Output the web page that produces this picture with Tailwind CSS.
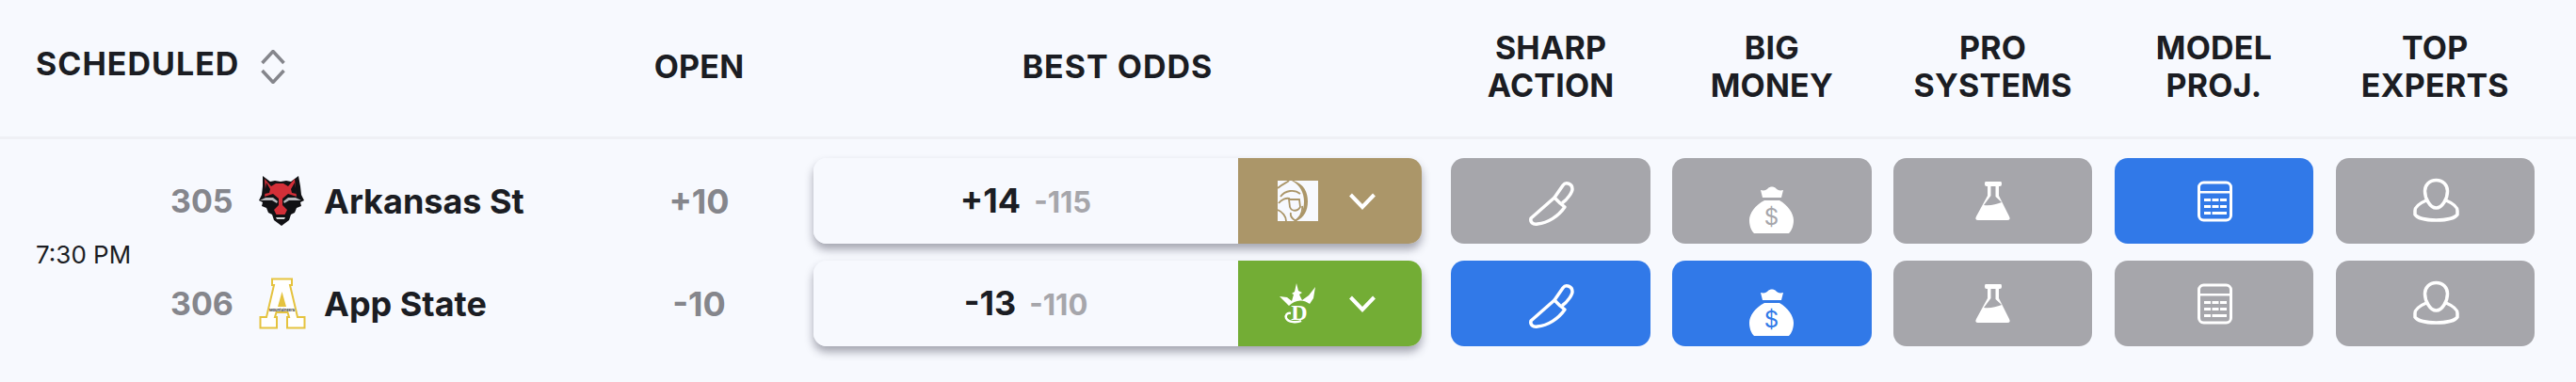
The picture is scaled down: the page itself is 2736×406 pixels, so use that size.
<!DOCTYPE html>
<html lang="en">
<head>
    <meta charset="UTF-8">
    <title>Odds Table</title>
    <script src="https://cdn.jsdelivr.net/npm/@tailwindcss/browser@4"></script>
</head>
<body class="h-[406px] w-[2736px] overflow-hidden bg-[#f7f9fe] text-[#1b1d23] font-['Inter',sans-serif]">
    <!-- header -->
    <div class="flex h-[148px] items-center border-b-[3px] border-[#eff0f5] pb-[4px] pl-[38px] text-[34px] leading-[40px] font-bold tracking-[0.2px] text-center">
        <div class="flex w-[623px] items-center">
            <span class="w-[239px] -mt-[5px] text-left tracking-[1px] whitespace-nowrap">SCHEDULED</span>
            <svg width="26" height="36" viewBox="0 0 26 36" fill="none" stroke="#85868c" stroke-width="3.5"><path d="M1.500 14 13 1.500 24.500 14M1.500 22 13 34.500 24.500 22"/></svg>
        </div>
        <div class="w-[163px]">OPEN</div>
        <div class="ml-[40px] w-[646px] tracking-[1px]">BEST ODDS</div>
        <div class="ml-[31.4px] w-[211.4px]">SHARP<br>ACTION</div>
        <div class="ml-[23.4px] w-[211.4px]">BIG<br>MONEY</div>
        <div class="ml-[23.4px] w-[211.4px]">PRO<br>SYSTEMS</div>
        <div class="ml-[23.4px] w-[211.4px]">MODEL<br>PROJ.</div>
        <div class="ml-[23.4px] w-[211.4px]">TOP<br>EXPERTS</div>
    </div>

    <!-- game -->
    <div class="flex pl-[38px] pt-[20px]">
        <div class="flex w-[143px] items-center pt-[4px] text-[26px] whitespace-nowrap">7:30 PM</div>
        <div class="flex flex-col gap-[18px]">

            <div class="flex h-[91px] items-center">
                <div class="w-[92px] text-[34px] font-bold text-[#85868c]">305</div>
                <div class="w-[71px]">
                    <svg class="-ml-[5px] -mt-[3px]" width="60" height="60" viewBox="0 0 60 60">
                        <path d="M11 5l8 6 5-1 6 1 6-1 5 1 8-6 2 11 1 9 3 6-4 2 1 4-5 2-2 5-4 2-2 6-4 3-4 3-4-3-4-3-2-6-4-2-2-5-5-2 1-4-4-2 3-6 1-9z" fill="#111114"/>
                        <path d="M13 8l7 8 5-3h8l5 3 7-8 1 12 1 7-9-3-6 5v7l5 5-3 6h-8l-3-6 5-5v-7l-6-5-9 3 1-7z" fill="#d32f38"/>
                        <path d="M15 12l4 7-1 4-5 1zM45 12l-4 7 1 4 5 1z" fill="#111114"/>
                        <path d="M8 31l6-3 8 0 5 4-1 2-5-3-7 0zM52 31l-6-3-8 0-5 4 1 2 5-3 7 0z" fill="#b8b8bc"/>
                        <path d="M24 46h12l-3 7h-6z" fill="#111114"/>
                        <path d="M25 49h10l-1 2h-8z" fill="#d8d8da"/>
                    </svg>
                </div>
                <div class="w-[317px] text-[36px] font-bold">Arkansas St</div>
                <div class="w-[163px] text-center text-[36px] font-bold text-[#85868c]">+10</div>
                <div class="ml-[40px] flex h-full w-[646px] overflow-hidden rounded-[14px] shadow-[0_6px_10px_rgba(40,40,60,0.4)]">
                    <div class="flex flex-1 items-baseline justify-center gap-[14px] bg-[#f7f9fe] font-bold">
                        <span class="text-[36px] leading-[91px]">+14</span>
                        <span class="text-[31px] text-[#a6a6ab]">-115</span>
                    </div>
                    <div class="flex w-[195px] items-center bg-[#ab9669] pl-[42px]">
                        <svg width="43" height="43" viewBox="0 0 43 43" fill="none" stroke="#ab9669" stroke-width="1.800">
                            <path d="M0 0h43v43H0z" fill="#f7f9fe" stroke="none"/>
                            <path d="M17 0c11 4 15 12 15 22s-4 17-12 21h-3c8-4 11-12 11-21S24 5 15 0z" fill="#ab9669" stroke="none"/>
                            <path d="M0 8C6 3 10 2 12 0M3 17c5-7 15-8 21-3M1 24c3-4 8-6 12-5M12 20h11l1 8c-3 5-9 5-11 0zM0 31c5 2 9 7 9 12M14 34c-1 4 2 7 6 9M26 27c1 7-2 12-8 16"/>
                        </svg>
                        <svg class="ml-[33px]" width="28" height="18" viewBox="0 0 28 18" fill="none" stroke="#fff" stroke-width="4"><path d="M1.500 2 14 15 26.500 2"/></svg>
                    </div>
                </div>
                <div class="ml-[31.4px] flex h-full w-[211.4px] items-center justify-center rounded-[14px] bg-[#a6a6ab]">
                    <svg width="70" height="91" viewBox="2 -12 70 91" fill="none" stroke="#fff" stroke-width="3.5" stroke-linejoin="round"><path d="M41 30 50 17c3-4 10-2 10 4 0 3-5 11-11 15"/><path d="M41 30l6 6 5 4c-7 10-18 17-29 18-5 1-8-2-7-6z"/></svg>
                </div>
                <div class="ml-[23.4px] flex h-full w-[211.4px] items-center justify-center rounded-[14px] bg-[#a6a6ab]">
                    <svg width="70" height="91" viewBox="2 -22 70 91"><path d="M25 12c4 1 6 0 8-2s6-2 8 0 4 3 8 2l-2 8H27zM29 23h16c9 5 15 14 15 21 0 6-2 11-5 14H18c-3-3-5-8-5-14 0-7 6-16 16-21z" fill="#fff"/><text x="36.500" y="49" text-anchor="middle" font-size="24" fill="#a6a6ab" font-family="Inter">$</text></svg>
                </div>
                <div class="ml-[23.4px] flex h-full w-[211.4px] items-center justify-center rounded-[14px] bg-[#a6a6ab]">
                    <svg width="70" height="91" viewBox="1 -12 70 91"><path d="M28 13h16q1 0 1 2v1q0 2-2 2h-1v10l11 22q2 4-2 4H20q-4 0-2-4l12-22V18h-1q-2 0-2-2v-1q0-2 1-2z" fill="#fff"/><path d="M33.500 18h5v11l6.500 6c-6 2-12 4-19 3l7.500-10z" fill="#a6a6ab"/></svg>
                </div>
                <div class="ml-[23.4px] flex h-full w-[211.4px] items-center justify-center rounded-[14px] bg-[#3179e8]">
                    <svg width="70" height="91" viewBox="-4 -12 70 91"><rect x="15.500" y="14" width="34" height="40" rx="5" fill="none" stroke="#fff" stroke-width="3"/><path d="M16 23h33v2.500H16zM21 31h7v3h-7zM29.500 31h7v3h-7zM38 31h7v3h-7zM21 38h7v3h-7zM29.500 38h7v3h-7zM38 38h7v3h-7zM21 45h7v3h-7zM29.500 45H45v3H29.500z" fill="#fff"/></svg>
                </div>
                <div class="ml-[23.4px] flex h-full w-[211.4px] items-center justify-center rounded-[14px] bg-[#a6a6ab]">
                    <svg width="70" height="91" viewBox="1 -12 70 91" fill="none" stroke="#fff" stroke-width="3.5"><path d="M37.500 11.500c7.500 0 12 5.500 12 11.500 0 8-5.500 18-12 18s-12-10-12-18c0-6 4.500-11.500 12-11.500z"/><path d="M27 33c-7 3-12 6-12 11v4c5 8 40 8 45 0v-4c0-5-5-8-12-11"/></svg>
                </div>
            </div>

            <div class="flex h-[91px] items-center">
                <div class="w-[92px] text-[34px] font-bold text-[#85868c]">306</div>
                <div class="w-[71px]">
                    <svg class="ml-[2px]" width="50" height="56" viewBox="0 0 50 56">
                        <path d="M14 1.500h21V8h-2l8 34h7.500v11.500H30V42h2l-1.500-5h-12L17 42h2v11.500H1.500V42H8l8-34h-2z" fill="#fff" stroke="#e5c33f" stroke-width="2"/>
                        <path d="M24.500 15 20 31h9z" fill="#e5c33f"/>
                        <text x="24.500" y="36" text-anchor="middle" font-size="4" font-weight="700" fill="#333" font-family="Inter">Mountaineers</text>
                    </svg>
                </div>
                <div class="w-[317px] text-[36px] font-bold">App State</div>
                <div class="w-[163px] text-center text-[36px] font-bold text-[#85868c]">-10</div>
                <div class="ml-[40px] flex h-full w-[646px] overflow-hidden rounded-[14px] shadow-[0_6px_10px_rgba(40,40,60,0.4)]">
                    <div class="flex flex-1 items-baseline justify-center gap-[14px] bg-[#f7f9fe] font-bold">
                        <span class="text-[36px] leading-[91px]">-13</span>
                        <span class="text-[31px] text-[#a6a6ab]">-110</span>
                    </div>
                    <div class="flex w-[195px] items-center bg-[#73ad35] pl-[44px]">
                        <svg width="39" height="44" viewBox="0 0 39 44">
                            <path d="M0 14l8 1 5 4 2-7-2-1 3-2 2-9 2 8 4 2-3 2 3 6 7-5 7-9-2 12-4 6c-8-6-16-4-22 2z" fill="#fff"/>
                            <text x="21" y="39" text-anchor="middle" font-size="24" font-weight="700" fill="#fff" font-family="Liberation Serif">D</text>
                            <path d="M12 32c-4-1-6 2-5 5 2 5 12 5 16 3" fill="none" stroke="#fff" stroke-width="2.5"/>
                        </svg>
                        <svg class="ml-[35px]" width="28" height="18" viewBox="0 0 28 18" fill="none" stroke="#fff" stroke-width="4"><path d="M1.500 2 14 15 26.500 2"/></svg>
                    </div>
                </div>
                <div class="ml-[31.4px] flex h-full w-[211.4px] items-center justify-center rounded-[14px] bg-[#3179e8]">
                    <svg width="70" height="91" viewBox="2 -12 70 91" fill="none" stroke="#fff" stroke-width="3.5" stroke-linejoin="round"><path d="M41 30 50 17c3-4 10-2 10 4 0 3-5 11-11 15"/><path d="M41 30l6 6 5 4c-7 10-18 17-29 18-5 1-8-2-7-6z"/></svg>
                </div>
                <div class="ml-[23.4px] flex h-full w-[211.4px] items-center justify-center rounded-[14px] bg-[#3179e8]">
                    <svg width="70" height="91" viewBox="2 -22 70 91"><path d="M25 12c4 1 6 0 8-2s6-2 8 0 4 3 8 2l-2 8H27zM29 23h16c9 5 15 14 15 21 0 6-2 11-5 14H18c-3-3-5-8-5-14 0-7 6-16 16-21z" fill="#fff"/><text x="36.500" y="49" text-anchor="middle" font-size="24" fill="#3179e8" font-family="Inter">$</text></svg>
                </div>
                <div class="ml-[23.4px] flex h-full w-[211.4px] items-center justify-center rounded-[14px] bg-[#a6a6ab]">
                    <svg width="70" height="91" viewBox="1 -12 70 91"><path d="M28 13h16q1 0 1 2v1q0 2-2 2h-1v10l11 22q2 4-2 4H20q-4 0-2-4l12-22V18h-1q-2 0-2-2v-1q0-2 1-2z" fill="#fff"/><path d="M33.500 18h5v11l6.500 6c-6 2-12 4-19 3l7.500-10z" fill="#a6a6ab"/></svg>
                </div>
                <div class="ml-[23.4px] flex h-full w-[211.4px] items-center justify-center rounded-[14px] bg-[#a6a6ab]">
                    <svg width="70" height="91" viewBox="-4 -12 70 91"><rect x="15.500" y="14" width="34" height="40" rx="5" fill="none" stroke="#fff" stroke-width="3"/><path d="M16 23h33v2.500H16zM21 31h7v3h-7zM29.500 31h7v3h-7zM38 31h7v3h-7zM21 38h7v3h-7zM29.500 38h7v3h-7zM38 38h7v3h-7zM21 45h7v3h-7zM29.500 45H45v3H29.500z" fill="#fff"/></svg>
                </div>
                <div class="ml-[23.4px] flex h-full w-[211.4px] items-center justify-center rounded-[14px] bg-[#a6a6ab]">
                    <svg width="70" height="91" viewBox="1 -12 70 91" fill="none" stroke="#fff" stroke-width="3.5"><path d="M37.500 11.500c7.500 0 12 5.500 12 11.500 0 8-5.500 18-12 18s-12-10-12-18c0-6 4.500-11.500 12-11.500z"/><path d="M27 33c-7 3-12 6-12 11v4c5 8 40 8 45 0v-4c0-5-5-8-12-11"/></svg>
                </div>
            </div>

        </div>
    </div>
</body>
</html>
